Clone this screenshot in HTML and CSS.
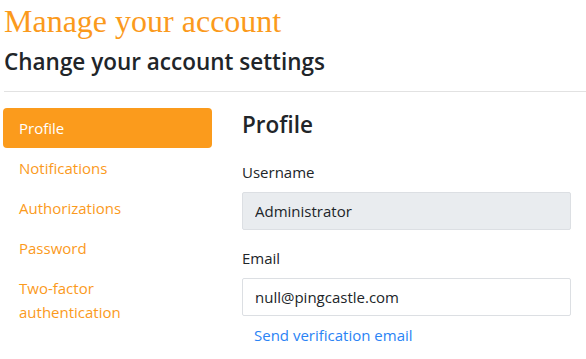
FILE: index.html
```html
<!DOCTYPE html>
<html lang="en">
<head>
    <meta charset="UTF-8">
    <title>Manage your account</title>
    <link rel="stylesheet" href="styles.css">
</head>
<body>
    <h1 class="page-title">Manage your account</h1>
    <div class="page-header">
        <h2 class="subtitle">Change your account settings</h2>
        <hr class="divider">
    </div>

    <div class="row">
        <ul class="nav">
            <li><a class="nav-link active" href="#">Profile</a></li>
            <li><a class="nav-link" href="#">Notifications</a></li>
            <li><a class="nav-link" href="#">Authorizations</a></li>
            <li><a class="nav-link" href="#">Password</a></li>
            <li><a class="nav-link" href="#">Two-factor authentication</a></li>
        </ul>

        <div class="content">
            <h4 class="section-title">Profile</h4>
            <div class="form-group">
                <label class="form-label">Username</label>
                <input class="form-control" type="text" value="Administrator" disabled>
            </div>
            <div class="form-group">
                <label class="form-label">Email</label>
                <input class="form-control" type="text" value="null@pingcastle.com">
                <button class="btn-link" type="button">Send verification email</button>
            </div>
        </div>
    </div>
</body>
</html>
```

FILE: styles.css
```css
* {
    margin: 0;
    padding: 0;
    box-sizing: border-box;
}

body {
    font-family: "Open Sans", "Noto Sans", sans-serif;
    font-size: 15px;
    line-height: 24px;
    color: #212529;
    background: #fff;
    overflow: hidden;
}

.page-title {
    font-family: "Liberation Serif", serif;
    font-weight: normal;
    font-size: 32px;
    line-height: 40px;
    color: #fb9a1c;
    padding: 1px 4px 0;
}

.page-header {
    padding-left: 4px;
}

.subtitle {
    font-size: 22.5px;
    font-weight: 600;
    line-height: 29px;
    margin-top: 6px;
}

.divider {
    border: 0;
    border-top: 1px solid #e2e2e2;
    margin-top: 15px;
}

.row {
    display: grid;
    grid-template-columns: 209px 329px;
    column-gap: 30px;
    padding-left: 3px;
    margin-top: 16px;
}

.nav {
    list-style: none;
}

.nav-link {
    display: block;
    padding: 8px 16px;
    color: #fb9a1c;
    text-decoration: none;
    border-radius: 4px;
}

.nav-link.active {
    background: #fb9b1c;
    color: #fff;
}

.section-title {
    font-size: 22.5px;
    font-weight: 600;
    line-height: 30px;
    margin-top: 2px;
    margin-bottom: 20px;
}

.form-group {
    margin-bottom: 16px;
}

.form-label {
    display: block;
    margin-bottom: 8px;
}

.form-control {
    display: block;
    width: 100%;
    height: 38px;
    padding: 6px 12px;
    font: inherit;
    color: #212529;
    background: #fff;
    border: 1px solid #dcdfe3;
    border-radius: 2px;
}

.form-control:disabled {
    background: #e9ecef;
    color: #212529;
}

.btn-link {
    display: inline-block;
    padding: 7px 12px;
    font: inherit;
    color: #2a83f5;
    background: none;
    border: 0;
}
```
